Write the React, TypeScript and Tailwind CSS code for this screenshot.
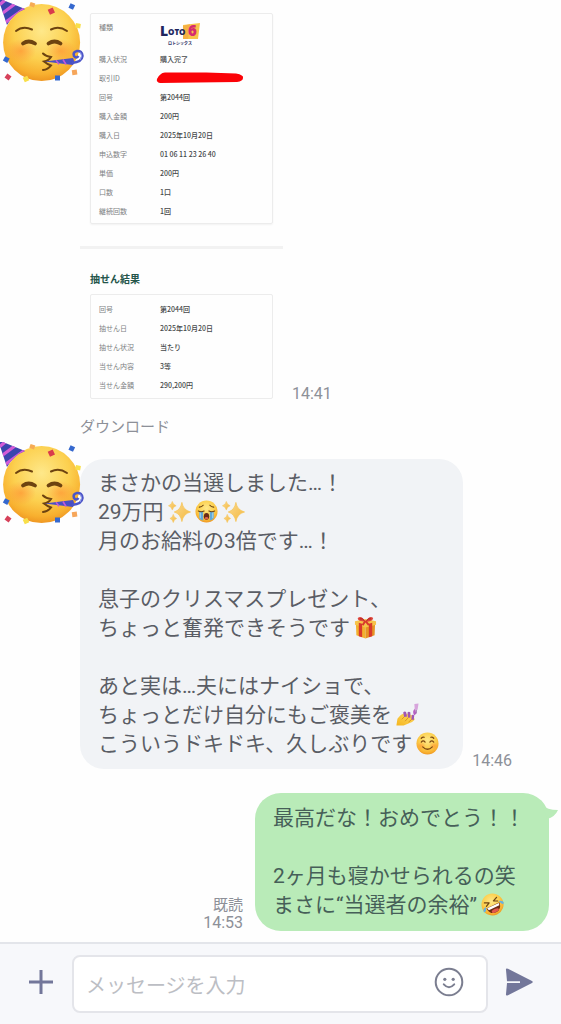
import type { ReactNode } from "react";
import clsx from "clsx";

const PURCHASE = [
    { label: "購入状況", value: "購入完了" },
    { label: "取引ID", value: "" },
    { label: "回号", value: "第2044回" },
    { label: "購入金額", value: "200円" },
    { label: "購入日", value: "2025年10月20日" },
    { label: "申込数字", value: "01 06 11 23 26 40" },
    { label: "単価", value: "200円" },
    { label: "口数", value: "1口" },
    { label: "継続回数", value: "1回" },
]

const RESULT = [
    { label: "回号", value: "第2044回" },
    { label: "抽せん日", value: "2025年10月20日" },
    { label: "抽せん状況", value: "当たり" },
    { label: "当せん内容", value: "3等" },
    { label: "当せん金額", value: "290,200円" },
]

// gradients shared by every emoji on the page
const EmojiDefs = () => (
    <svg width="0" height="0" className="absolute" aria-hidden="true">
        <defs>
            <radialGradient id="face" cx="0.5" cy="0.35" r="0.66">
                <stop offset="0" stopColor="#fee88a" />
                <stop offset="0.55" stopColor="#fcd04f" />
                <stop offset="0.85" stopColor="#f8b02f" />
                <stop offset="1" stopColor="#ee9420" />
            </radialGradient>
            <radialGradient id="blush">
                <stop offset="0" stopColor="#ff8a30" stopOpacity="0.6" />
                <stop offset="1" stopColor="#ff8f3a" stopOpacity="0" />
            </radialGradient>
            <linearGradient id="spark" x1="0" y1="0" x2="1" y2="1">
                <stop offset="0" stopColor="#fbd98c" />
                <stop offset="1" stopColor="#f3b83f" />
            </linearGradient>
            <linearGradient id="nail" x1="0" y1="1" x2="1" y2="0">
                <stop offset="0" stopColor="#f5b51f" />
                <stop offset="1" stopColor="#fddb62" />
            </linearGradient>
            <clipPath id="hat">
                <path d="M-2 -2 L25 9 Q14 13 7 25 Z" />
            </clipPath>
        </defs>
    </svg>
)

const PartyFace = () => (
    <svg viewBox="0 0 84 84" className="h-[84px] w-[84px]" role="img" aria-label="avatar">
        <circle cx="41.6" cy="42.6" r="38.5" fill="url(#face)" />
        <ellipse cx="21" cy="51" rx="15" ry="12" fill="url(#blush)" />
        <ellipse cx="61" cy="51" rx="15" ry="12" fill="url(#blush)" />
        <g clipPath="url(#hat)">
            <rect x="-2" y="-2" width="30" height="30" fill="#3b46ae" />
            <path d="M-2 6 L10 -4 M0 15 L19 1 M3 24 L28 6" stroke="#d35bd6" strokeWidth="3.2" />
        </g>
        <g fill="none" stroke="#6d4310" strokeLinecap="round">
            <path d="M16 31 Q23 25.500 32 29.5" strokeWidth="2" />
            <path d="M51 29.5 Q59 25.500 67 31" strokeWidth="2" />
            <path d="M23 43.500 Q28.500 39.500 35 43.500" strokeWidth="3.800" />
            <path d="M48.500 43.500 Q54.500 39.500 60.500 43.500" strokeWidth="3.800" />
            <path d="M43 53.500 Q46 56.500 51 57 Q49 60.500 44 61.500 Q47 64 51 65.500 Q48 69.500 43 70" strokeWidth="2" />
        </g>
        <path d="M44.500 61.500 L73 58 Q75 61.500 73 65 Z" fill="#4a4fc4" />
        <path d="M56 60.300 l3 4 M63 59.500 l3 5" stroke="#c35ad4" strokeWidth="1.6" />
        <path d="M72 63 Q82 62 82.500 56 Q82 50.500 77 51 Q72.500 52 74 56 Q76 59 78.500 56" fill="none" stroke="#4c55c8" strokeWidth="2.600" />
        <path d="M80 60 Q83 56 80.500 52.500" fill="none" stroke="#9ca6ee" strokeWidth="1" />
        <rect x="30" y="2.500" width="5" height="4" fill="#f6ab55" transform="rotate(20 32 4)" />
        <rect x="48.500" y="8.500" width="5.500" height="5.500" fill="#d93b4d" transform="rotate(-25 51 11)" />
        <rect x="69.500" y="4" width="5" height="5" fill="#3568ce" transform="rotate(25 72 6)" />
        <rect x="75.500" y="23.500" width="5" height="4.500" fill="#f8df4a" transform="rotate(10 78 26)" />
        <rect x="3.500" y="57" width="5" height="5" fill="#3568ce" transform="rotate(28 6 60)" />
        <rect x="5.500" y="74.500" width="5" height="5" fill="#d6415a" transform="rotate(35 8 77)" />
        <rect x="23.500" y="76.500" width="5" height="5" fill="#f8df4a" transform="rotate(-25 26 79)" />
        <rect x="55" y="75.500" width="5" height="5" fill="#3568ce" />
        <rect x="72" y="70" width="5" height="5" fill="#f6a65a" transform="rotate(-8 74 72)" />
    </svg>
)

const Emoji = ({ label, children }: { label: string; children: ReactNode }) => (
    <svg viewBox="0 0 24 24" className="mb-[3px] ml-1 inline-block h-[23px] w-[23px] align-middle" role="img" aria-label={label}>
        {children}
    </svg>
)

const Sparkles = () => (
    <Emoji label="✨">
        <path d="M14.500 2.500 Q15.800 10.500 23.500 12.500 Q15.800 14.500 14.500 22.500 Q13.200 14.500 6.500 12.500 Q13.200 10.500 14.500 2.500Z" fill="url(#spark)" stroke="#f6c55c" strokeWidth="0.800" />
        <path d="M4.500 1.500 Q5.200 5 8.500 6 Q5.200 7 4.500 10.500 Q3.800 7 0.500 6 Q3.800 5 4.500 1.500Z" fill="url(#spark)" stroke="#f6c55c" strokeWidth="0.600" />
        <path d="M5.500 15 Q6.200 18.500 9 19.300 Q6.200 20 5.500 23.500 Q4.800 20 2 19.300 Q4.800 18.500 5.500 15Z" fill="url(#spark)" stroke="#f6c55c" strokeWidth="0.600" />
    </Emoji>
)

const Crying = () => (
    <Emoji label="😭">
        <circle cx="12" cy="12" r="11.500" fill="url(#face)" />
        <path d="M4.500 12 H8.500 V21.500 Q6 21 4.500 19Z M15.500 12 H19.500 V19 Q18 21 15.500 21.500Z" fill="#62a9d8" />
        <path d="M5.500 13 V19 M18.500 13 V19" stroke="#a5d6ef" strokeWidth="1" />
        <path d="M3.500 11.500 Q6.500 13 9.500 11.500 M14.500 11.500 Q17.500 13 20.500 11.500 M4.500 7.500 Q7 7.500 8.500 5.500 M15.500 5.500 Q17 7.500 19.500 7.500" fill="none" stroke="#6d4310" strokeWidth="1.200" strokeLinecap="round" />
        <ellipse cx="12" cy="17" rx="2.800" ry="3.500" fill="#6a2b16" />
        <ellipse cx="12" cy="19" rx="1.800" ry="1.200" fill="#e4604f" />
    </Emoji>
)

const Gift = () => (
    <Emoji label="🎁">
        <path d="M2 8 L12 11 V23.500 L2.500 20Z" fill="#f2b12d" />
        <path d="M12 11 L22 8 L21.500 20 L12 23.500Z" fill="#e69424" />
        <path d="M1 5.500 L12 3 L23 5.500 V9 L12 12 L1 9Z" fill="#f6c34a" />
        <path d="M5 7 L8.500 8 V22.300 L5 21Z M15.500 8 L19 7 V21 L15.500 22.300Z" fill="#d8382c" />
        <path d="M12 6 Q8 -1 4 2 Q3 5.500 12 6 Q20 5.500 20 2 Q16 -1 12 6Z" fill="#e0483e" />
        <path d="M6 3 Q9 2 11 5 M18 3 Q15 2 13 5" stroke="#a91f1e" strokeWidth="1" fill="none" />
        <path d="M12 5 L9 9.500 M12 5 L15.500 9.500" stroke="#d8382c" strokeWidth="2" />
    </Emoji>
)

const NailPolish = () => (
    <Emoji label="💅">
        <path d="M0.500 23 L1.500 16.500 Q5 11.500 8.500 11 L14 11.500 Q19.500 14 19.500 17.500 Q17 20.500 13 21.500 L8 23.500 H0.500Z" fill="url(#nail)" />
        <path d="M6 17 L10 13 M9.500 19 L13 15 M13 20 L16.500 17" stroke="#d68a1c" strokeWidth="0.900" />
        <path d="M8.500 14.500 L7.500 10 Q9 8 10.500 9.500 L11.500 14Z M12.500 15 L12 10 Q13.500 8.500 15 10 L15 15.500Z M16 17 L16.500 12.500 Q18.500 11.500 19 13.500 L18.500 18Z" fill="#a055b4" />
        <path d="M19 13 Q16.500 9 19.500 6 L20.500 9 Q22 11 19 13Z" fill="#b85fc4" />
        <path d="M19.200 1 L23.500 0.500 L22.500 7 L19.500 7Z" fill="#d7a4dc" />
        <path d="M21 7 V11" stroke="#a06bb0" strokeWidth="1.400" />
    </Emoji>
)

const Relaxed = () => (
    <Emoji label="☺️">
        <circle cx="12" cy="12" r="11.500" fill="url(#face)" />
        <ellipse cx="5.500" cy="14.500" rx="5" ry="4" fill="url(#blush)" />
        <ellipse cx="18.500" cy="14.500" rx="5" ry="4" fill="url(#blush)" />
        <path d="M5.500 10.500 Q7.500 8 9.500 10.500 M14.500 10.500 Q16.500 8 18.500 10.500 M7 15.500 Q12 20.500 17 15.500 M5.500 6.500 Q7 5 8.500 5.500 M15.500 5.500 Q17 5 18.500 6.500" fill="none" stroke="#7c4712" strokeWidth="1.300" strokeLinecap="round" />
    </Emoji>
)

const Rofl = () => (
    <Emoji label="🤣">
        <g transform="rotate(-25 12 12)">
            <circle cx="12" cy="12" r="11.500" fill="url(#face)" />
            <path d="M5 7 L9.500 9 L5.500 11 M19 7 L14.500 9 L18.500 11" fill="none" stroke="#6d4310" strokeWidth="1.300" strokeLinecap="round" strokeLinejoin="round" />
            <path d="M4.500 13 H19.500 Q18.500 21 12 21 Q5.500 21 4.500 13Z" fill="#702c14" />
            <path d="M5.300 13.300 H18.700 L18 15.800 H6Z" fill="#fff" />
            <ellipse cx="12" cy="19" rx="4" ry="1.700" fill="#e2584d" />
            <path d="M4.500 11.500 Q0 12.500 0.500 15.500 Q3 17.500 4.500 11.500Z M19.500 11.500 Q24 12.500 23.500 15.500 Q21 17.500 19.500 11.500Z" fill="#65b2e2" />
        </g>
    </Emoji>
)

const Loto = () => (
    <svg viewBox="0 0 42 25" className="h-[25px] w-[42px] overflow-visible" role="img" aria-label="LOTO6">
        <path d="M23 3 L40 1 L38 17 L23 17Z" fill="#f8c34b" />
        <path d="M23 4 L30 2 L28 17 L23 17Z" fill="#f4a33e" opacity="0.6" />
        <text x="0" y="14" fontFamily="Open Sans, sans-serif" fontWeight="800" fontSize="14" fill="#20265e">L</text>
        <text x="8" y="13" fontFamily="Open Sans, sans-serif" fontWeight="800" fontSize="8" fill="#20265e">OTO</text>
        <text x="28" y="14" fontFamily="Open Sans, sans-serif" fontWeight="800" fontSize="15" fill="#d62b70">6</text>
        <text x="8" y="23" fontFamily="Noto Sans CJK JP, sans-serif" fontWeight="900" fontSize="4" fill="#34386c">ロトシックス</text>
    </svg>
)

const Rows = ({ rows }: { rows: { label: string; value: string }[] }) => (
    <>
        {rows.map((row) => (
            <tr key={row.label} className="h-[19px]">
                <th scope="row" className="w-[61px] p-0 text-left font-normal text-[#7d8082]">{row.label}</th>
                <td className="p-0 font-medium text-[#46494b]">
                    {row.value || (
                        <svg viewBox="0 0 88 12" className="-ml-1 h-3 w-[88px]" role="img" aria-label="非公開">
                            <path d="M5 2 Q6 0.500 9 0.500 L50 0.500 L80 1.500 Q88 3 87 6 Q87 9 81 10 L40 10.500 L4 11 Q0 10 1 7 Q2 4 5 2Z" fill="#fb0207" />
                        </svg>
                    )}
                </td>
            </tr>
        ))}
    </>
)

const Receipt = () => (
    <div className="flex h-[402px] w-[203px] flex-col pt-[13px] font-['Noto_Sans_CJK_JP',sans-serif] text-[7px] leading-[10px]">
        <div className="mx-[10px] rounded-xs border border-[#ececec] pb-[3px] pl-2 shadow-xs">
            <table className="w-full border-collapse">
                <tbody>
                    <tr className="h-[35px]">
                        <th scope="row" className="w-[61px] p-0 pt-2 text-left align-top font-normal text-[#7d8082]">種類</th>
                        <td className="p-0 pt-2 align-top"><Loto /></td>
                    </tr>
                    <Rows rows={PURCHASE} />
                </tbody>
            </table>
        </div>
        <div className="mt-[22px] h-[3px] bg-[#f2f2f2]" />
        <h2 className="mx-[10px] mt-[23px] text-[10px] leading-[14px] font-bold text-[#24554a]">抽せん結果</h2>
        <div className="mx-[10px] mt-2 rounded-xs border border-[#ececec] py-1 pl-2">
            <table className="w-full border-collapse">
                <tbody>
                    <Rows rows={RESULT} />
                </tbody>
            </table>
        </div>
    </div>
)

const Bubble = ({ mine, children }: { mine?: boolean; children: ReactNode }) => (
    <div className={clsx("relative pr-6 pl-[18px] text-[21px] leading-[29px] whitespace-nowrap", {
        "rounded-[26px] bg-[#b9ebb8] py-[11px] text-[#465f58]": mine,
        "rounded-[24px] bg-[#f1f3f6] py-[10px] text-[#5a5d65]": !mine,
    })}>
        {children}
        {mine && (
            <svg viewBox="0 0 18 16" className="absolute top-3 -right-[9px] h-4 w-[18px]" aria-hidden="true">
                <path d="M2 0 Q7 5 18 5 Q15 12 7 14Z" fill="#b9ebb8" />
            </svg>
        )}
    </div>
)

const Line = ({ children }: { children?: ReactNode }) => (
    <p className="h-[29px]">{children}</p>
)

const Composer = () => (
    <form className="flex items-center border-t-2 border-[#e3e5ea] bg-[#f7f8fb] pt-[11px] pr-[27px] pb-[11px] pl-[25px]" onSubmit={(e) => e.preventDefault()}>
        <button type="button" aria-label="追加" className="mr-[15px] -mt-1 shrink-0 p-1">
            <svg viewBox="0 0 24 24" className="h-6 w-6" fill="none" stroke="#73779a" strokeWidth="3">
                <path d="M12 0 V24 M0 12 H24" />
            </svg>
        </button>
        <div className="flex h-[58px] min-w-0 flex-1 items-center rounded-lg border-2 border-[#e4e5ea] bg-white pr-[22px] pl-3">
            <input
                type="text"
                aria-label="メッセージを入力"
                placeholder="メッセージを入力"
                className="h-full min-w-0 flex-1 pt-1 text-[20px] text-[#5a5d65] outline-none placeholder:text-[#bcbec4]"
            />
            <button type="button" aria-label="絵文字" className="-mt-1 shrink-0">
                <svg viewBox="0 0 30 30" className="h-[30px] w-[30px]" fill="none" stroke="#7b7e90" strokeWidth="2">
                    <circle cx="15" cy="15" r="13.300" />
                    <circle cx="10.800" cy="12.300" r="1.600" fill="#7b7e90" stroke="none" />
                    <circle cx="19.200" cy="12.300" r="1.600" fill="#7b7e90" stroke="none" />
                    <path d="M9.800 17.300 Q15 23 20.200 17.300" strokeLinecap="round" />
                </svg>
            </button>
        </div>
        <button type="submit" aria-label="送信" className="-mt-1 ml-4 shrink-0">
            <svg viewBox="0 0 30 28" className="h-7 w-[30px]">
                <path d="M2 2 Q1.500 0 4 0.800 L28 13 Q29.500 14 28 15 L4 27.200 Q1.500 28 2 26 L3 15 H16 V13.200 H3Z" fill="#73779a" />
            </svg>
        </button>
    </form>
)

const Chat = () => {
    return <div className="bg-[#fefefe] font-[Roboto,'Noto_Sans_CJK_JP',sans-serif]" lang="ja">
        <EmojiDefs />
        <main>
            <div className="flex items-start">
                <div className="w-20 shrink-0"><PartyFace /></div>
                <div>
                    <div className="flex items-end">
                        <Receipt />
                        <time className="ml-[9px] text-[16px] leading-4 text-[#8d9098]">14:41</time>
                    </div>
                    <a href="#download" className="mt-[15px] block text-[15px] leading-5 text-[#8d9098]">ダウンロード</a>
                </div>
            </div>

            <div className="mt-[5px] flex items-start">
                <div className="w-20 shrink-0"><div className="relative z-10"><PartyFace /></div></div>
                <div className="mt-[17px] flex items-end">
                    <Bubble>
                        <Line>まさかの当選しました…！</Line>
                        <Line>29万円<Sparkles /><Crying /><Sparkles /></Line>
                        <Line>月のお給料の3倍です…！</Line>
                        <Line />
                        <Line>息子のクリスマスプレゼント、</Line>
                        <Line>ちょっと奮発できそうです<Gift /></Line>
                        <Line />
                        <Line>あと実は…夫にはナイショで、</Line>
                        <Line>ちょっとだけ自分にもご褒美を<NailPolish /></Line>
                        <Line>こういうドキドキ、久しぶりです<Relaxed /></Line>
                    </Bubble>
                    <time className="ml-[9px] text-[16px] leading-4 text-[#8d9098]">14:46</time>
                </div>
            </div>

            <div className="mt-6 mr-3 mb-[11px] flex items-end justify-end">
                <div className="mr-3 text-right text-[#8d9098]">
                    <p className="text-[15px] leading-5">既読</p>
                    <time className="block text-[16px] leading-4">14:53</time>
                </div>
                <Bubble mine>
                    <Line>最高だな！おめでとう！！</Line>
                    <Line />
                    <Line>2ヶ月も寝かせられるの笑</Line>
                    <Line>まさに“当選者の余裕”<Rofl /></Line>
                </Bubble>
            </div>
        </main>
        <Composer />
    </div>
}

export default Chat;
